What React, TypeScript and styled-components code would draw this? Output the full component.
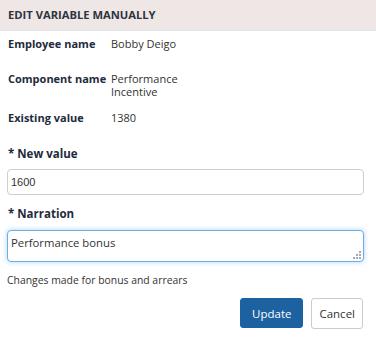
import React, { useEffect, useRef } from "react";
import styled, { createGlobalStyle } from "styled-components";

const Global = createGlobalStyle`
  html, body { margin: 0; padding: 0; background: #fff; }
  body { font-family: "Open Sans", "Liberation Sans", sans-serif; color: #333; }
  * { box-sizing: border-box; }
`;

const Panel = styled.div`
  width: 376px;
  height: 351px;
  background: #fff;
  display: flex;
  flex-direction: column;
`;

const Header = styled.div`
  height: 31px;
  background: #efe7e5;
  border-bottom: 1px solid #dfe3ea;
  display: flex;
  align-items: center;
  padding: 0 8px 1px;
  font-size: 11.2px;
  font-weight: 700;
  color: #2e3440;
`;

const Body = styled.div`
  padding: 6px 12px 0 7px;
  display: flex;
  flex-direction: column;
`;

const InfoRow = styled.div`
  display: grid;
  grid-template-columns: 104px 1fr;
  min-height: 35px;
  padding-bottom: 13px;
  align-items: start;
`;

const InfoLabel = styled.div`
  font-size: 11px;
  font-weight: 700;
  line-height: 14px;
  color: #1e2b3c;
  padding-left: 1px;
  white-space: nowrap;
`;

const InfoValue = styled.div`
  font-size: 11px;
  line-height: 13px;
  color: #333;
  max-width: 80px;
`;

const FieldLabel = styled.div<{ $top: number }>`
  margin-top: ${(p) => p.$top}px;
  font-size: 11.5px;
  font-weight: 700;
  line-height: 16px;
  color: #1e2b3c;
  padding-left: 1px;
`;

const TextInput = styled.input`
  margin-top: 7px;
  width: 100%;
  height: 26px;
  border: 1px solid #cfcfcf;
  border-radius: 4px;
  padding: 0 3px;
  font-family: "Liberation Sans", Arial, sans-serif;
  font-size: 11px;
  color: #333;
  outline: none;
`;

const AreaWrap = styled.div`
  margin-top: 8px;
  position: relative;
`;

const TextArea = styled.textarea`
  width: 100%;
  height: 32px;
  border: 1px solid #66afe9;
  border-radius: 4px;
  box-shadow: 0 0 5px rgba(102, 175, 233, 0.55);
  padding: 3px 3px;
  font-family: "Open Sans", sans-serif;
  font-size: 11.3px;
  line-height: 17px;
  color: #333;
  outline: none;
  resize: none;
  display: block;
`;

const Grip = styled.svg`
  position: absolute;
  right: 3px;
  bottom: 3px;
  width: 8px;
  height: 8px;
  pointer-events: none;
`;

const Help = styled.div`
  margin-top: 11px;
  font-size: 10.4px;
  line-height: 15px;
  color: #333;
`;

const Actions = styled.div`
  margin-top: 10px;
  display: flex;
  justify-content: flex-end;
  align-items: flex-start;
  gap: 8px;
  padding-right: 1px;
`;

const Button = styled.button<{ $primary?: boolean }>`
  height: ${(p) => (p.$primary ? 30 : 31)}px;
  padding: 0 ${(p) => (p.$primary ? 11 : 7)}px;
  border-radius: 3px;
  font-family: "Open Sans", sans-serif;
  font-size: 11.5px;
  cursor: pointer;
  background: ${(p) => (p.$primary ? "#1d62a0" : "#fff")};
  color: ${(p) => (p.$primary ? "#fff" : "#333")};
  border: 1px solid ${(p) => (p.$primary ? "#1d62a0" : "#cccccc")};
`;

export default function App() {
  const ref = useRef<HTMLTextAreaElement>(null);
  useEffect(() => {
    const el = ref.current;
    if (el) {
      el.focus();
      const n = el.value.length;
      el.setSelectionRange(n, n);
    }
  }, []);
  return (
    <>
      <Global />
      <Panel>
        <Header>EDIT VARIABLE MANUALLY</Header>
        <Body>
          <InfoRow>
            <InfoLabel>Employee name</InfoLabel>
            <InfoValue>Bobby Deigo</InfoValue>
          </InfoRow>
          <InfoRow>
            <InfoLabel>Component name</InfoLabel>
            <InfoValue>Performance Incentive</InfoValue>
          </InfoRow>
          <InfoRow>
            <InfoLabel>Existing value</InfoLabel>
            <InfoValue>1380</InfoValue>
          </InfoRow>
          <FieldLabel $top={0}>* New value</FieldLabel>
          <TextInput defaultValue="1600" />
          <FieldLabel $top={11}>* Narration</FieldLabel>
          <AreaWrap>
            <TextArea ref={ref} defaultValue="Performance bonus" />
            <Grip viewBox="0 0 8 8">
              <g fill="#a8a8a8">
                <rect x="6" y="0" width="2" height="2" />
                <rect x="3" y="3" width="2" height="2" />
                <rect x="6" y="3" width="2" height="2" />
                <rect x="0" y="6" width="2" height="2" />
                <rect x="3" y="6" width="2" height="2" />
                <rect x="6" y="6" width="2" height="2" />
              </g>
            </Grip>
          </AreaWrap>
          <Help>Changes made for bonus and arrears</Help>
          <Actions>
            <Button $primary>Update</Button>
            <Button>Cancel</Button>
          </Actions>
        </Body>
      </Panel>
    </>
  );
}
